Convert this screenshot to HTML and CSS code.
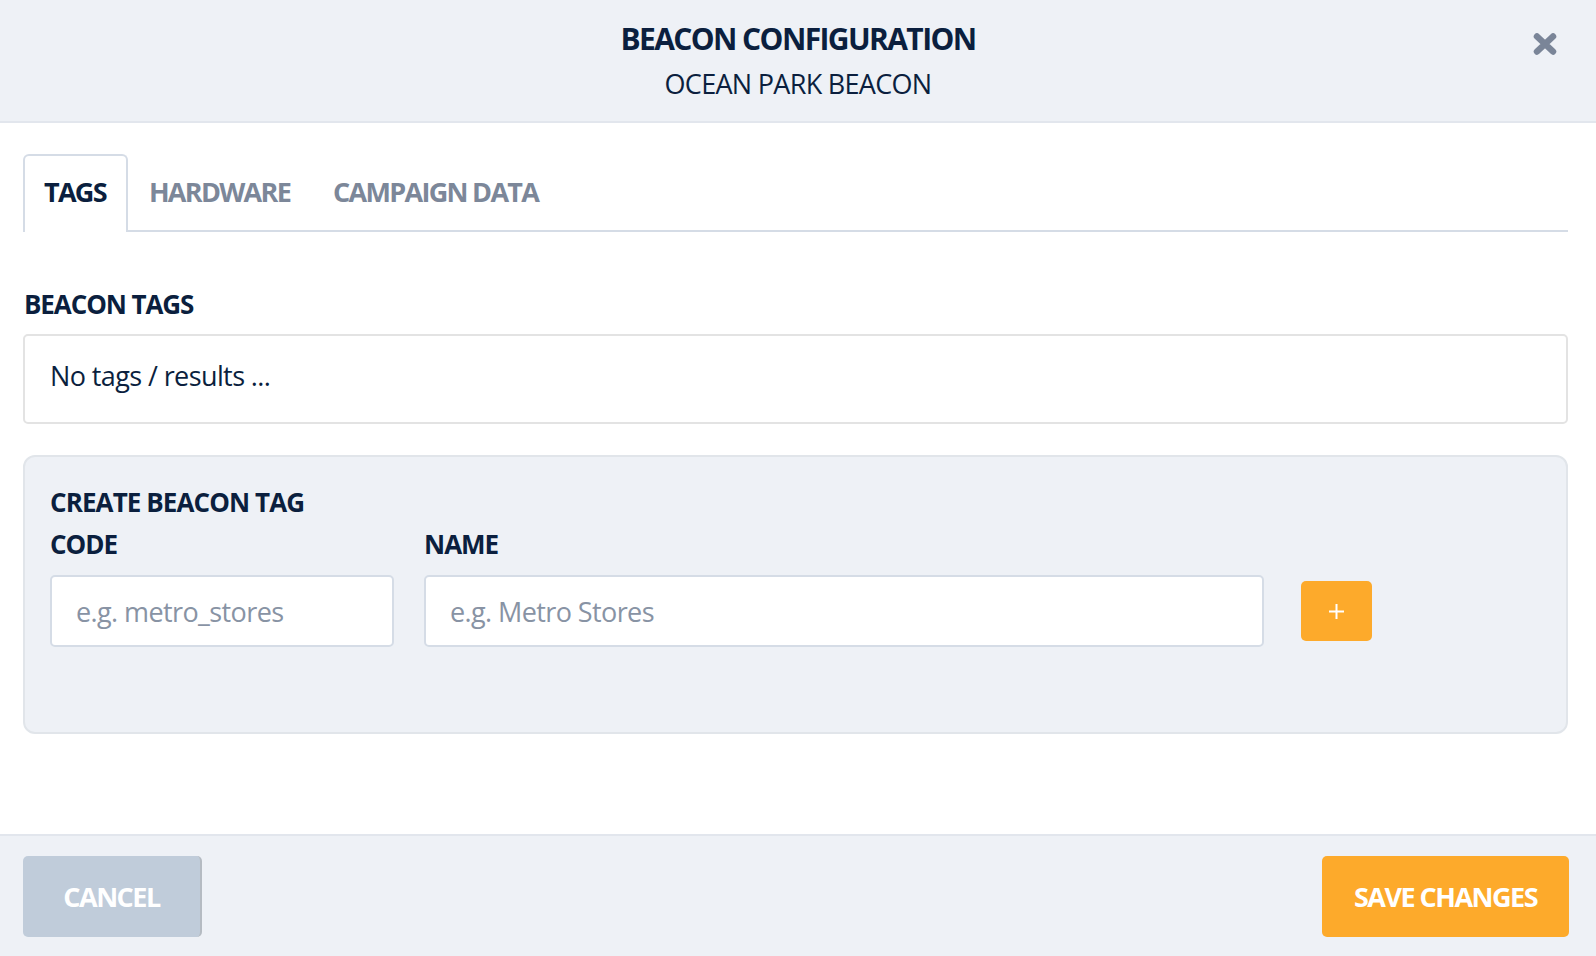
FILE: index.html
```html
<!DOCTYPE html>
<html lang="en">
<head>
<meta charset="utf-8">
<title>Beacon Configuration</title>
<link rel="stylesheet" href="styles.css">
</head>
<body>
<div class="modal">
  <header class="modal-header">
    <h1 class="modal-title">BEACON CONFIGURATION</h1>
    <div class="modal-subtitle">OCEAN PARK BEACON</div>
    <button class="close-btn" aria-label="Close">
      <svg viewBox="0 0 26 24" width="26" height="24"><path d="M5 4.5 L21 19.5 M21 4.5 L5 19.5" stroke="#7a8598" stroke-width="6.5" stroke-linecap="round"/></svg>
    </button>
  </header>

  <main class="modal-body">
    <nav class="tabs">
      <div class="tab active">TAGS</div>
      <div class="tab">HARDWARE</div>
      <div class="tab">CAMPAIGN DATA</div>
    </nav>

    <h2 class="section-label">BEACON TAGS</h2>
    <div class="tags-box">No tags / results ...</div>

    <section class="create-panel">
      <h3 class="panel-title">CREATE BEACON TAG</h3>
      <div class="field-row">
        <div class="field code-field">
          <label class="field-label">CODE</label>
          <input class="text-input" type="text" placeholder="e.g. metro_stores">
        </div>
        <div class="field name-field">
          <label class="field-label">NAME</label>
          <input class="text-input" type="text" placeholder="e.g. Metro Stores">
        </div>
        <button class="add-btn" aria-label="Add">
          <svg viewBox="0 0 15 15" width="15" height="15"><path d="M7.5 0 V15 M0 7.5 H15" stroke="#ffffff" stroke-width="2"/></svg>
        </button>
      </div>
    </section>
  </main>

  <footer class="modal-footer">
    <button class="btn btn-cancel">CANCEL</button>
    <button class="btn btn-save">SAVE CHANGES</button>
  </footer>
</div>
</body>
</html>
```
FILE: styles.css
```css
* { box-sizing: border-box; }

html, body {
  margin: 0;
  padding: 0;
  background: #ffffff;
}

body {
  font-family: "Open Sans", "Noto Sans", sans-serif;
  font-stretch: normal;
  color: #0b1f3e;
}

.modal {
  display: flex;
  flex-direction: column;
  height: 956px;
}

/* Header */
.modal-header {
  position: relative;
  height: 123px;
  flex: none;
  background: #eef1f6;
  border-bottom: 2px solid #e2e6ed;
  text-align: center;
  padding-top: 19px;
}

.modal-title {
  margin: 0;
  font-size: 30px;
  line-height: 40px;
  font-weight: 700;
  letter-spacing: -1.6px;
}

.modal-subtitle {
  margin-top: 7px;
  font-size: 27px;
  line-height: 36px;
  font-weight: 400;
  letter-spacing: -0.7px;
}

.close-btn {
  position: absolute;
  top: 32px;
  right: 38px;
  width: 26px;
  height: 24px;
  padding: 0;
  border: 0;
  background: none;
  display: flex;
}

/* Body */
.modal-body {
  flex: 1;
  padding: 31px 28px 0 23px;
}

.tabs {
  display: flex;
  border-bottom: 2px solid #d5dce6;
  height: 78px;
}

.tab {
  font-size: 27px;
  line-height: 36px;
  font-weight: 700;
  letter-spacing: -1.7px;
  color: #7c8799;
  padding: 18px 20px 0 19px;
  border: 2px solid transparent;
  border-bottom: 0;
  height: 78px;
}

.tab.active {
  color: #0b1f3e;
  background: #ffffff;
  border-color: #d5dce6;
  border-radius: 6px 6px 0 0;
  margin-bottom: -2px;
}

.section-label {
  margin: 56px 0 0 1px;
  font-size: 26px;
  line-height: 32px;
  font-weight: 700;
  letter-spacing: -1.1px;
}

.tags-box {
  margin-top: 14px;
  height: 90px;
  border: 2px solid #e3e3e3;
  border-radius: 5px;
  padding: 22px 25px 0;
  font-size: 27px;
  line-height: 36px;
  letter-spacing: -0.6px;
}

.create-panel {
  margin-top: 31px;
  background: #eef1f6;
  border: 2px solid #e1e5ea;
  border-radius: 12px;
  padding: 29px 25px 85px;
}

.panel-title {
  margin: 0;
  font-size: 26px;
  line-height: 32px;
  font-weight: 700;
  letter-spacing: -0.9px;
}

.field-row {
  display: flex;
  align-items: flex-end;
  margin-top: 10px;
}

.field {
  display: flex;
  flex-direction: column;
}

.code-field { width: 344px; }
.name-field { width: 840px; margin-left: 30px; }

.field-label {
  font-size: 26px;
  line-height: 32px;
  font-weight: 700;
  letter-spacing: -1px;
  margin-bottom: 15px;
}

.text-input {
  height: 72px;
  border: 2px solid #d5dce6;
  border-radius: 5px;
  background: #ffffff;
  padding: 0 24px;
  font-family: inherit;
  font-stretch: normal;
  font-size: 27px;
  letter-spacing: -0.6px;
  color: #0b1f3e;
  outline: none;
}

.text-input::placeholder {
  color: #8893a4;
}

.add-btn {
  width: 71px;
  height: 60px;
  margin: 0 0 6px 37px;
  border: 0;
  border-radius: 5px;
  background: #fdaa2b;
  display: flex;
  align-items: center;
  justify-content: center;
  padding: 0;
}

/* Footer */
.modal-footer {
  flex: none;
  height: 122px;
  background: #eef1f6;
  border-top: 2px solid #e2e6ed;
  display: flex;
  justify-content: space-between;
  align-items: flex-start;
  padding: 20px 27px 0 23px;
}

.btn {
  height: 81px;
  border: 0;
  border-radius: 5px;
  color: #ffffff;
  font-family: inherit;
  font-stretch: normal;
  font-size: 27px;
  font-weight: 700;
  letter-spacing: -1.5px;
  padding: 0;
}

.btn-cancel {
  width: 179px;
  background: #c0ccda;
  border-right: 2px solid #b5bbc2;
}

.btn-save {
  width: 247px;
  background: #fdaa2b;
}
```
